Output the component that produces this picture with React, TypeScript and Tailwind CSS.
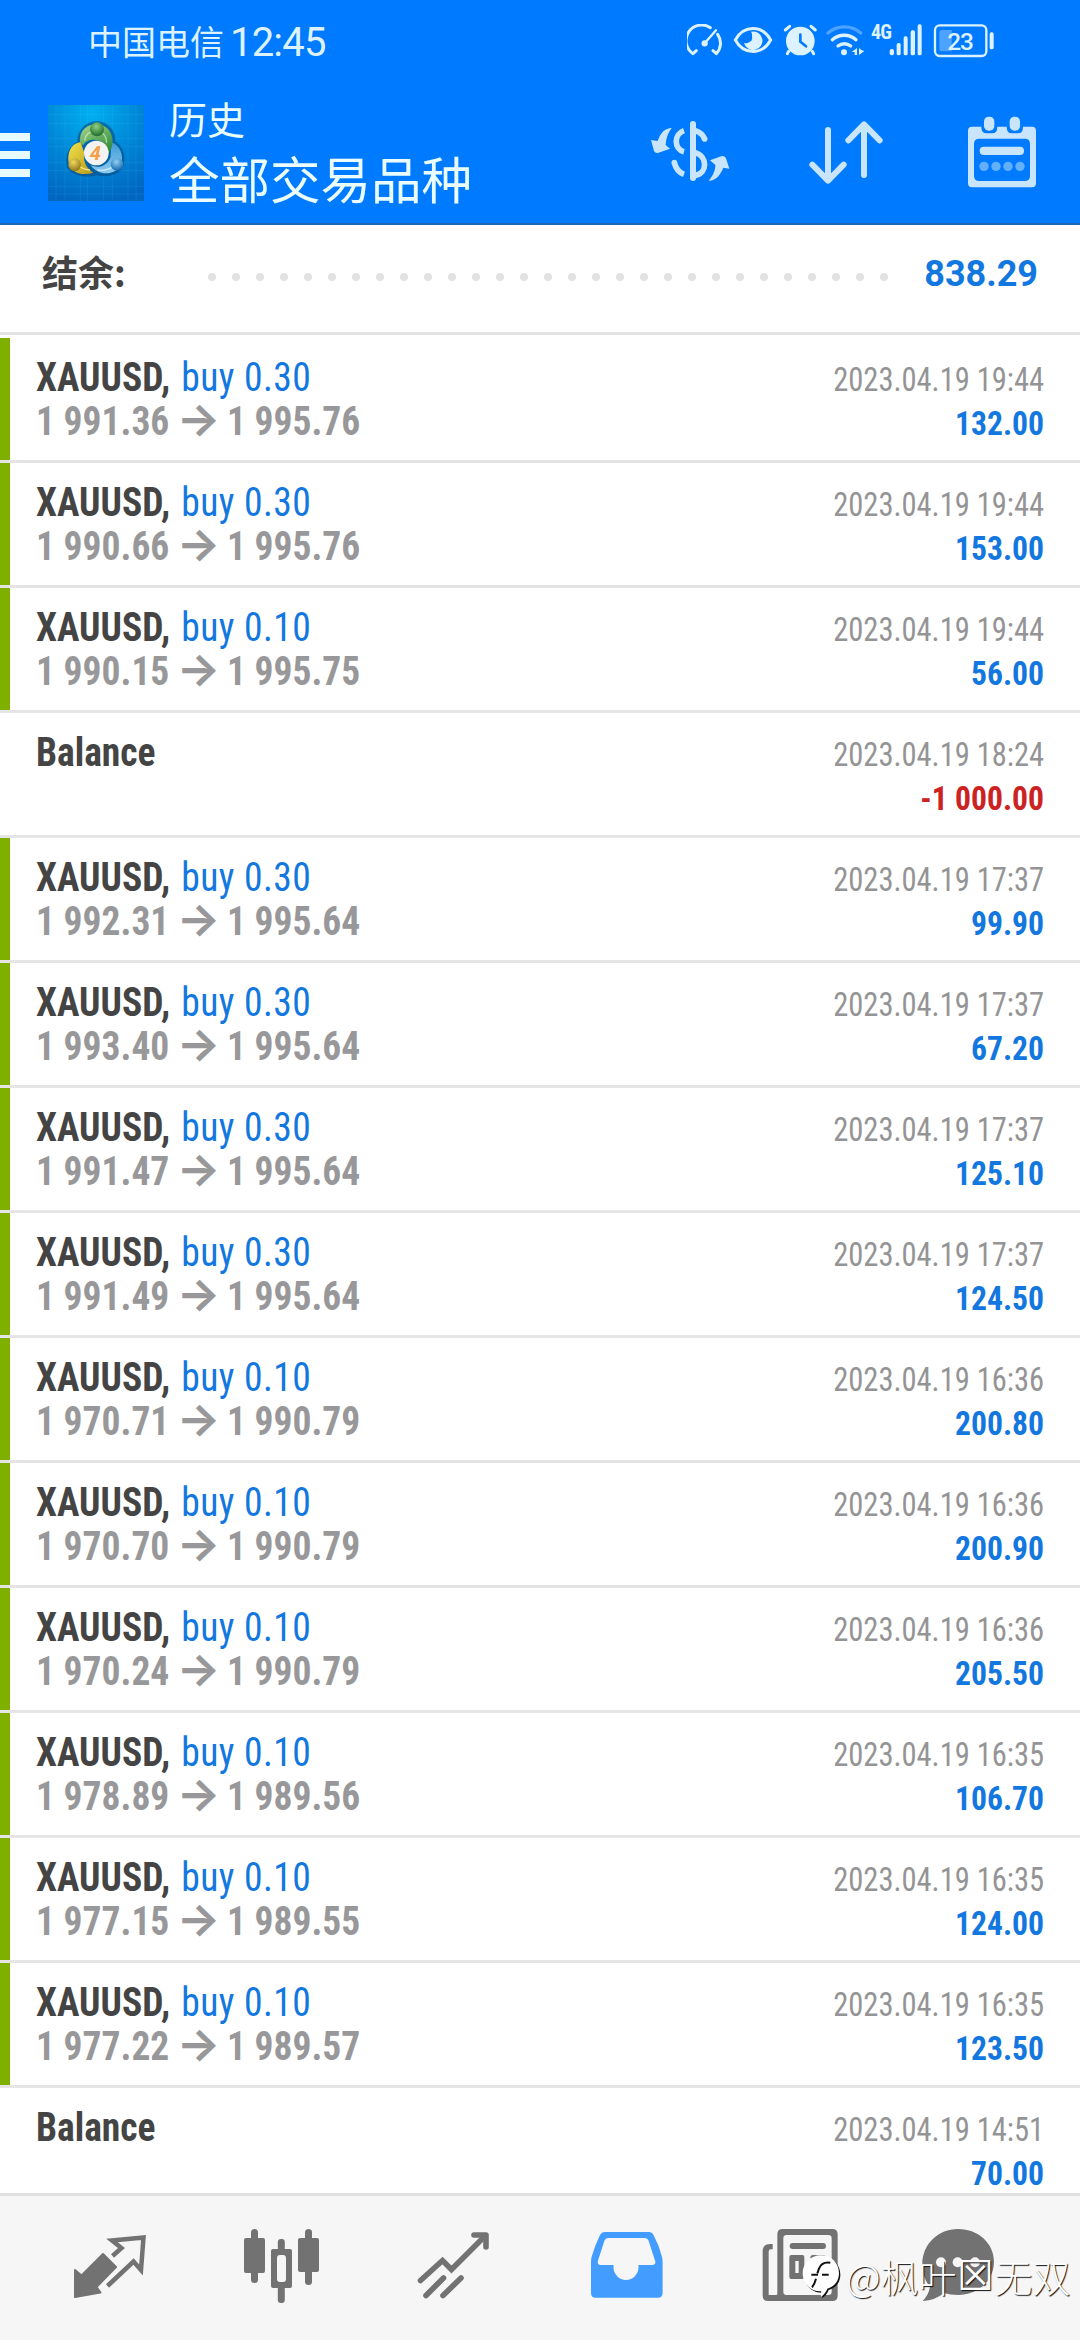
import React from 'react'
import type { FC, ReactNode } from 'react'
import clsx from 'clsx'

type Deal = {
  volume?: string
  open?: string
  close?: string
  time: string
  profit: string
}

const deals: Deal[] = [
  { volume: '0.30', open: '1 991.36', close: '1 995.76', time: '2023.04.19 19:44', profit: '132.00' },
  { volume: '0.30', open: '1 990.66', close: '1 995.76', time: '2023.04.19 19:44', profit: '153.00' },
  { volume: '0.10', open: '1 990.15', close: '1 995.75', time: '2023.04.19 19:44', profit: '56.00' },
  { time: '2023.04.19 18:24', profit: '-1 000.00' },
  { volume: '0.30', open: '1 992.31', close: '1 995.64', time: '2023.04.19 17:37', profit: '99.90' },
  { volume: '0.30', open: '1 993.40', close: '1 995.64', time: '2023.04.19 17:37', profit: '67.20' },
  { volume: '0.30', open: '1 991.47', close: '1 995.64', time: '2023.04.19 17:37', profit: '125.10' },
  { volume: '0.30', open: '1 991.49', close: '1 995.64', time: '2023.04.19 17:37', profit: '124.50' },
  { volume: '0.10', open: '1 970.71', close: '1 990.79', time: '2023.04.19 16:36', profit: '200.80' },
  { volume: '0.10', open: '1 970.70', close: '1 990.79', time: '2023.04.19 16:36', profit: '200.90' },
  { volume: '0.10', open: '1 970.24', close: '1 990.79', time: '2023.04.19 16:36', profit: '205.50' },
  { volume: '0.10', open: '1 978.89', close: '1 989.56', time: '2023.04.19 16:35', profit: '106.70' },
  { volume: '0.10', open: '1 977.15', close: '1 989.55', time: '2023.04.19 16:35', profit: '124.00' },
  { volume: '0.10', open: '1 977.22', close: '1 989.57', time: '2023.04.19 16:35', profit: '123.50' },
  { time: '2023.04.19 14:51', profit: '70.00' },
]

const StatusBar = () => (
  <div className="flex h-[82px] items-start pl-[88px] pr-[85px] text-[#dcf2ff]">
    <div className="mt-[16px] font-['Noto_Sans_CJK_SC',sans-serif] text-[34px] leading-[50px]">
      中国电信
    </div>
    <div className="ml-[6px] mt-[18px] font-[Roboto,sans-serif] text-[40px] leading-[50px] tracking-[-0.8px]">
      12:45
    </div>
    <div className="ml-auto mt-[24px] flex items-start">
      <svg className="h-8 w-[35px]" viewBox="141 72 105 96" fill="none" stroke="currentColor" strokeWidth="9" strokeLinecap="round" strokeLinejoin="round">
        <path d="M169 152L159 161A46 46 0 0 1 211 83" />
        <path d="M233 103A46 46 0 0 1 229 161L219 152" />
        <path d="M194 130L228 91" strokeWidth="7" />
        <circle cx="194" cy="130" r="5" />
      </svg>
      <svg className="ml-[11px] h-8 w-[40px]" viewBox="276 72 120 96">
        <path d="M283 120C308 74 364 74 389 120C364 166 308 166 283 120Z" fill="none" stroke="currentColor" strokeWidth="9" />
        <path d="M330 95A28 28 0 1 1 309 128Q318 132 325 126Q336 122 333 110Q334 100 330 95Z" fill="currentColor" />
      </svg>
      <svg className="ml-[10px] h-8 w-[35px]" viewBox="425 72 105 96" stroke="currentColor" strokeWidth="9" strokeLinecap="round" fill="none">
        <circle cx="477" cy="123" r="43" fill="currentColor" stroke="none" />
        <path d="M432 90L445 79M522 90L509 79M442 154L438 161M513 154L517 161" />
        <path d="M477 104V125L494 139" stroke="#007aff" strokeWidth="8" />
      </svg>
      <svg className="ml-[8px] h-8 w-[39px]" viewBox="554 72 117 96" stroke="currentColor" strokeWidth="10" strokeLinecap="round" fill="none">
        <path d="M560 99A75 75 0 0 1 658 99" opacity=".35" />
        <path d="M573 119A54 54 0 0 1 644 119" />
        <path d="M590 138A30 30 0 0 1 628 138" />
        <circle cx="608" cy="157" r="9" fill="currentColor" stroke="none" />
        <path d="M647 144L631 156H640V165H647ZM653 144V165L669 153L660 150Z" fill="currentColor" stroke="none" />
      </svg>
      <div className="ml-[6px] w-[18px] font-['Roboto_Condensed',Roboto,sans-serif] text-[20px] font-bold leading-[17px] tracking-[-0.8px]">
        4G
      </div>
      <svg className="h-8 w-[34px]" viewBox="742 72 102 96" fill="currentColor">
        <rect x="744" y="147" width="13" height="19" rx="6" />
        <rect x="765" y="129" width="12" height="37" rx="5" />
        <rect x="786" y="109" width="12" height="57" rx="5" />
        <rect x="807" y="91" width="13" height="75" rx="5" />
        <rect x="828" y="73" width="12" height="93" rx="5" />
      </svg>
      <svg className="ml-[10px] h-[34px] w-[62px]" viewBox="874 72 186 102" fill="currentColor">
        <rect x="880" y="76" width="154" height="92" rx="14" fill="none" stroke="currentColor" strokeWidth="7" />
        <path d="M900 90H930V154H900Q893 154 893 146V98Q893 90 900 90Z" opacity=".35" />
        <rect x="1044" y="97" width="12" height="51" rx="5" />
        <text x="955" y="150" textAnchor="middle" fontFamily="Roboto, sans-serif" fontWeight="500" fontSize="73" letterSpacing="-3">
          23
        </text>
      </svg>
    </div>
  </div>
)

const AppLogo = () => (
  <svg className="ml-[18px] size-24" viewBox="24 45 288 288">
    <defs>
      <radialGradient id="sky" cx=".45" cy=".08" r=".95">
        <stop offset="0" stopColor="#00b0f0" />
        <stop offset=".5" stopColor="#0088d8" />
        <stop offset="1" stopColor="#0066c0" />
      </radialGradient>
      <linearGradient id="green" x2=".6" y2="1">
        <stop offset="0" stopColor="#a8d890" />
        <stop offset="1" stopColor="#2f8a3a" />
      </linearGradient>
      <linearGradient id="yellow" y2="1">
        <stop offset="0" stopColor="#f2e24a" />
        <stop offset="1" stopColor="#b99a1c" />
      </linearGradient>
      <linearGradient id="blue" x2="0" y2="1">
        <stop offset="0" stopColor="#3d9ad8" />
        <stop offset="1" stopColor="#8ccbf0" />
      </linearGradient>
      <radialGradient id="greenBall" cx=".45" cy=".3" r=".7">
        <stop offset="0" stopColor="#8fd080" />
        <stop offset="1" stopColor="#1d6a2c" />
      </radialGradient>
      <radialGradient id="yellowBall" cx=".4" cy=".3" r=".7">
        <stop offset="0" stopColor="#f0d860" />
        <stop offset="1" stopColor="#93791a" />
      </radialGradient>
      <radialGradient id="blueBall" cx=".45" cy=".3" r=".7">
        <stop offset="0" stopColor="#8fd0f5" />
        <stop offset="1" stopColor="#1769ad" />
      </radialGradient>
    </defs>
    <rect x="24" y="45" width="288" height="288" fill="url(#sky)" />
    <path
      d="M48 45V333M75 45V333M121 45V333M142 45V333M190 45V333M217 45V333M264 45V333M288 45V333M24 74H312M24 101H312M24 146H312M24 170H312M24 217H312M24 242H312M24 289H312M24 312H312"
      stroke="#5cc8f5"
      strokeOpacity=".18"
      strokeWidth="2"
    />
    <path d="M112 156C112 118 140 94 170 94C204 94 228 122 226 154C250 170 258 198 250 228C240 254 204 264 170 256C140 264 100 260 82 234C72 200 86 168 112 156Z" fill="#064a80" opacity=".6" />
    <path d="M122 156C92 160 80 190 87 222C95 250 130 258 160 248C140 236 128 214 134 192Z" fill="url(#yellow)" />
    <path d="M214 156C242 168 252 196 243 226C226 256 176 260 152 226C176 236 202 228 212 200Z" fill="url(#blue)" />
    <path d="M121 160C116 122 140 103 170 103C204 103 224 136 216 168C210 186 206 194 200 198C204 170 190 152 168 150C150 148 136 154 130 166Z" fill="url(#green)" />
    <path d="M134 152C136 132 150 122 170 124C190 126 200 140 200 158" fill="none" stroke="#d5f0c4" strokeWidth="4" opacity=".7" />
    <path d="M104 212C116 232 134 240 150 240" fill="none" stroke="#fff6a0" strokeWidth="4" opacity=".8" />
    <path d="M172 240C196 244 218 236 228 220" fill="none" stroke="#d9f0ff" strokeWidth="4" opacity=".8" />
    <circle cx="171" cy="118" r="21" fill="url(#greenBall)" />
    <circle cx="104" cy="224" r="19" fill="url(#yellowBall)" />
    <circle cx="231" cy="223" r="19" fill="url(#blueBall)" />
    <circle cx="169" cy="189" r="37" fill="#f3f3f1" />
    <text x="166" y="209" textAnchor="middle" fontFamily="Roboto, sans-serif" fontWeight="700" fontStyle="italic" fontSize="60" fill="#f3a04a">
      4
    </text>
  </svg>
)

const Toolbar = () => (
  <div className="flex h-[141px] items-start text-[#c8e5fb]">
    <div className="mt-[51px] flex flex-col gap-2.5">
      <div className="h-2 w-[30px] bg-[#e6fbff]" />
      <div className="h-2 w-[30px] bg-[#e6fbff]" />
      <div className="h-2 w-[30px] bg-[#e6fbff]" />
    </div>
    <div className="mt-[23px]">
      <AppLogo />
    </div>
    <div className="ml-[25px] mt-[12px] font-['Noto_Sans_CJK_SC',sans-serif] text-[#eafdff]">
      <div className="text-[38px] leading-[48px]">历史</div>
      <div className="mt-px text-[50.5px] leading-[68px]">全部交易品种</div>
    </div>
    <div className="ml-auto mr-[43px] mt-[33px] flex items-start">
      <svg className="mt-[5px] h-[62px] w-20" viewBox="30 45 240 186" fill="currentColor">
        <rect x="150" y="48" width="18" height="180" rx="9" />
        <g fill="none" stroke="currentColor" strokeWidth="17">
          <path d="M132 77C101 88 101 132 132 140" />
          <path d="M166 77Q188 84 194 103" />
          <path d="M166 143C203 153 203 205 166 211" />
          <path d="M103 173Q110 200 132 208" />
        </g>
        <circle cx="194" cy="102" r="8.5" />
        <circle cx="103" cy="173" r="8.5" />
        <path d="M95 69C75 70 62 82 53 108L33 105L42 138Q46 146 56 143L90 131L77 120C78 100 84 84 95 69Z" />
        <path d="M206 228C228 226 241 210 250 188L268 191L258 160Q254 152 246 153L210 166L226 180C226 198 218 212 206 228Z" />
      </svg>
      <svg className="ml-[79px] mt-[5px] h-[65px] w-[74px]" viewBox="507 360 222 195" fill="none" stroke="currentColor" strokeWidth="18" strokeLinecap="round" strokeLinejoin="round">
        <path d="M564 390V541M517 494L564 542L611 494" />
        <path d="M672 525V374M625 421L672 373L719 421" />
      </svg>
      <svg className="ml-[84px] h-[74px] w-[70px]" viewBox="981 345 210 222" fill="currentColor">
        <path
          fillRule="evenodd"
          d="M996 380H1024Q1024 400 1040 400H1056Q1072 400 1072 380H1100Q1100 400 1116 400H1134Q1149 400 1149 380H1176Q1188 380 1188 392V550Q1188 562 1176 562H996Q984 562 984 550V392Q984 380 996 380ZM1018 416Q1002 416 1002 432V528Q1002 543 1018 543H1154Q1170 543 1170 528V432Q1170 416 1154 416Z"
        />
        <rect x="1032" y="350" width="31" height="42" rx="14" />
        <rect x="1109" y="350" width="31" height="42" rx="14" />
        <rect x="1019" y="440" width="133" height="25" rx="12" />
        <g opacity=".5">
          <circle cx="1032" cy="499" r="14" />
          <circle cx="1068" cy="499" r="14" />
          <circle cx="1104" cy="499" r="14" />
          <circle cx="1140" cy="499" r="14" />
        </g>
      </svg>
    </div>
  </div>
)

const Summary = () => (
  <div className="flex h-[110px] shrink-0 items-center border-b-3 border-[#e5e5e5] pb-[13px] pl-[42px] pr-[42px]">
    <div className="mb-0.5 w-[166px] font-['Noto_Sans_CJK_SC',sans-serif] text-[36px] font-bold text-[#444]">
      结余:
    </div>
    <div className="mt-[9px] flex gap-4">
      {Array.from({ length: 29 }, (_, i) => (
        <div key={i} className="size-2 rounded-full bg-[#e2e2e2]" />
      ))}
    </div>
    <div className="ml-auto mt-1 font-[Roboto,sans-serif] text-[36px] font-bold text-[#1377e0]">
      838.29
    </div>
  </div>
)

const DealRow: FC<{ deal: Deal }> = ({ deal }) => {
  const isBalance = !deal.volume
  const isLoss = deal.profit.startsWith('-')

  return (
    <div className="flex h-[125px] shrink-0 border-b-3 border-[#e5e5e5] font-['Roboto_Condensed',Roboto,sans-serif]">
      <div className={clsx('w-2.5', !isBalance && 'bg-[#7fb000]')} />
      <div className="ml-[26px] mt-[17px] origin-left scale-x-[0.915] whitespace-nowrap text-[41px] leading-[44px]">
        <div className="h-[44px]">
          <span className="font-bold text-[#444]">{isBalance ? 'Balance' : 'XAUUSD,'}</span>
          {!isBalance && (
            <span className="ml-[2px] tracking-[0.5px] text-[#1377e0]"> buy {deal.volume}</span>
          )}
        </div>
        {!isBalance && (
          <div className="flex h-[44px] items-center font-bold text-[#98989a]">
            <span>{deal.open}</span>
            <span className="mb-1 w-[63px] scale-x-[1.12] text-center font-[Inter,sans-serif] text-[45px] font-bold leading-[44px]">
              →
            </span>
            <span>{deal.close}</span>
          </div>
        )}
      </div>
      <div className="ml-auto mr-9 mt-[19px] whitespace-nowrap text-right text-[34px] leading-[44px]">
        <div className="origin-right scale-x-[0.897] text-[#949496]">{deal.time}</div>
        <div
          className={clsx(
            'origin-right scale-x-[0.93] font-bold',
            isLoss ? 'text-[#cc2222]' : 'text-[#1377e0]'
          )}
        >
          {deal.profit}
        </div>
      </div>
    </div>
  )
}

type NavIconProps = {
  viewBox: string
  children: ReactNode
}

const NavIcon: FC<NavIconProps> = ({ viewBox, children }) => (
  <div className="flex w-[172px] items-center justify-center">
    <svg className="size-[84px] overflow-visible" viewBox={viewBox} fill="currentColor">
      {children}
    </svg>
  </div>
)

const BottomNav = () => (
  <nav className="relative flex h-[147px] shrink-0 border-t-3 border-[#e0e0e0] bg-[#f6f6f6] pl-6 text-[#727272]">
    <NavIcon viewBox="68 46 84 84">
      <path d="M75 90L81.500 95.500L103 74L116 87L96.500 107L100.500 112.500L75 117Z" stroke="currentColor" strokeWidth="2" strokeLinejoin="round" />
      <path d="M112.500 76L121.500 68L112 60.500L143.500 57.500L141 90L133.500 81.500L107.500 106" fill="none" stroke="currentColor" strokeWidth="4.500" />
    </NavIcon>
    <NavIcon viewBox="240 46 84 84">
      <rect x="244" y="58" width="21" height="35" rx="2" />
      <rect x="251" y="49" width="7" height="54" rx="3.500" />
      <path fillRule="evenodd" d="M273 69H290Q292 69 292 71V106Q292 108 290 108H273Q271 108 271 106V71Q271 69 273 69ZM280 75Q277 75 277 78V99Q277 102 280 102H283Q286 102 286 99V78Q286 75 283 75Z" />
      <rect x="277.800" y="59" width="7" height="12" rx="3" />
      <rect x="277.800" y="106" width="7" height="17" rx="3" />
      <rect x="298" y="58" width="21" height="34" rx="2" />
      <rect x="305" y="49" width="7" height="56" rx="3.500" />
    </NavIcon>
    <NavIcon viewBox="412 46 84 84">
      <g fill="none" stroke="currentColor" strokeWidth="5.600" strokeLinecap="round">
        <path d="M420.500 100.500L442.500 80.500L451.500 89.500L485 56" />
        <path d="M474 55H486V67" strokeLinejoin="round" />
        <path d="M426 115.500L443.500 98M443 115.500L461 98" />
      </g>
    </NavIcon>
    <NavIcon viewBox="584 46 84 84">
      <path
        fill="#439cff"
        fillRule="evenodd"
        d="M605 52H649Q652 52 653.500 55Q659 65 662 77Q662.600 79 662.600 82V113Q662.600 117.700 658 117.700H595.500Q591 117.700 591 113V82Q591 79 591.600 77Q595 65 600 55Q601.500 52 605 52ZM608 58Q605.500 58 604.500 60.500L598 80.500Q597 85 600.500 85H613.500V87A12.500 13 0 0 0 638.500 87V85H653Q656.500 84 655 80.500L648.500 60.500Q647.500 58 645 58Z"
      />
    </NavIcon>
    <NavIcon viewBox="756 46 84 84">
      <g transform="translate(750 35) scale(.3333)">
        <path fillRule="evenodd" d="M98 42H247Q263 42 263 58V242Q263 258 247 258H54Q38 258 38 242V109Q38 87 60 87H68V103H62Q56 103 56 110V240H78Q82 240 82 236V58Q82 42 98 42ZM110 60Q100 60 100 70V230Q100 240 110 240H235Q245 240 245 230V70Q245 60 235 60Z" />
        <rect x="119" y="84" width="109" height="18" rx="9" />
        <path fillRule="evenodd" d="M124 120H157Q163 120 163 126V186Q163 192 157 192H124Q118 192 118 186V126Q118 120 124 120ZM136 138V174H146V138Z" />
        <rect x="181" y="120" width="47" height="16" rx="8" />
        <rect x="181" y="152" width="47" height="16" rx="8" />
      </g>
    </NavIcon>
    <NavIcon viewBox="928 46 84 84">
      <g transform="translate(750 35) scale(.3333)">
        <path d="M624 42C686 42 732 86 732 140C732 196 686 240 624 240Q600 240 582 234Q556 256 518 258Q536 240 540 216C524 196 517 172 517 148C517 86 566 42 624 42Z" />
        <g fill="#f6f6f6">
          <circle cx="573" cy="142" r="15" />
          <circle cx="623" cy="142" r="15" />
          <circle cx="675" cy="142" r="15" />
        </g>
      </g>
    </NavIcon>

    {/* author mark laid over the last two tabs */}
    <div className="absolute left-[801px] top-[60px] flex items-start text-white">
      <svg className="h-[46px] w-10 overflow-visible" viewBox="153 138 120 138">
        <path d="M213 136C245 136 267 160 267 190C267 214 252 230 232 236Q226 252 213 260Q212 250 214 244C182 246 158 220 158 190C158 160 182 136 213 136Z" fill="#111" transform="translate(4 4)" />
        <path d="M213 136C245 136 267 160 267 190C267 214 252 230 232 236Q226 252 213 260Q212 250 214 244C182 246 158 220 158 190C158 160 182 136 213 136Z" fill="#fff" />
        <path d="M241 158C222 155 212 162 207 176L202 190M198 206Q194 222 186 232M184 194H204M216 194H236" fill="none" stroke="#111" strokeWidth="6" />
      </svg>
      <div className="-mt-[3px] ml-[5px] flex whitespace-nowrap font-['Noto_Sans_CJK_SC',sans-serif] text-[38px] font-light leading-[46px] [text-shadow:1px_1px_1px_#111]">
        <span>@枫叶</span>
        <span className="w-[38px] text-center font-['DejaVu_Sans',sans-serif] text-[41px]">☒</span>
        <span>无双</span>
      </div>
    </div>
  </nav>
)

export default function App() {
  return (
    <div className="flex h-[2340px] w-[1080px] flex-col overflow-hidden bg-white">
      <header className="h-[225px] shrink-0 border-b-2 border-[#1a6ab8] bg-[#007aff]">
        <StatusBar />
        <Toolbar />
      </header>
      <Summary />
      <main className="flex min-h-0 flex-1 flex-col overflow-hidden pt-[3px]">
        {deals.map((deal, i) => (
          <DealRow key={i} deal={deal} />
        ))}
      </main>
      <BottomNav />
    </div>
  )
}
